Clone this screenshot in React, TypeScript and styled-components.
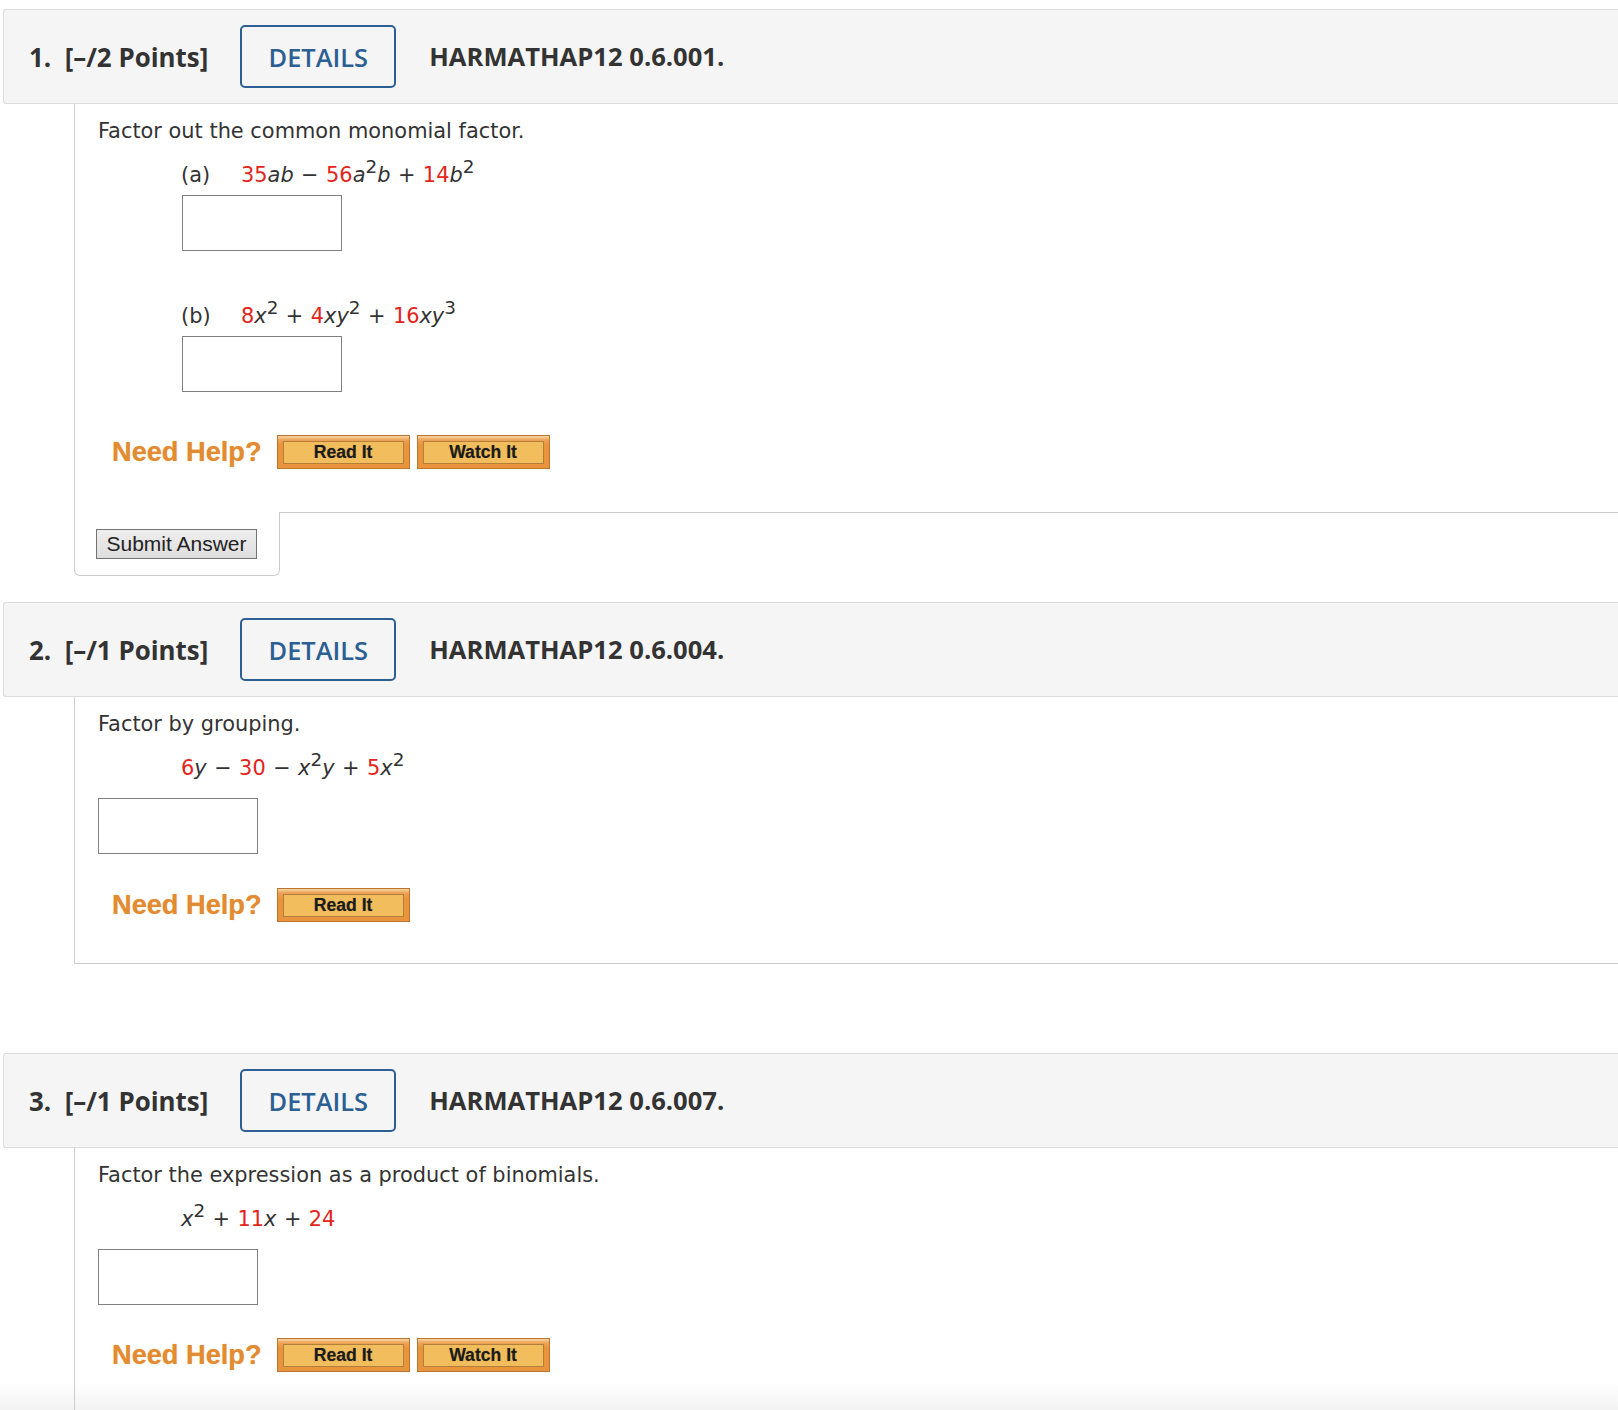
import React from "react";
import styled, { createGlobalStyle } from "styled-components";

const Global = createGlobalStyle`
  html, body { margin: 0; padding: 0; background: #fff; }
  * { box-sizing: border-box; }
`;

const Page = styled.div`
  width: 1618px;
  height: 1410px;
  overflow: hidden;
  padding: 9px 0 0 3px;
  background: linear-gradient(to bottom, #ffffff 0, #ffffff 1382px, #f3f3f3 1410px);
  font-family: "DejaVu Sans", Verdana, sans-serif;
  color: #333;
`;

const Question = styled.section<{ $gap: number }>`
  margin-bottom: ${(p) => p.$gap}px;
`;

const Header = styled.div`
  height: 95px;
  display: flex;
  align-items: center;
  padding-left: 25px;
  background: #f5f5f5;
  border: 1px solid #dcdcdc;
  border-right: none;
  border-radius: 3px 0 0 3px;
  font-family: "Open Sans", "DejaVu Sans", sans-serif;
  font-weight: 700;
  font-size: 25.6px;
  color: #333;
`;

const Points = styled.span`
  white-space: pre;
  font-size: 25.9px;
  margin-right: 32px;
`;

const DetailsButton = styled.button`
  width: 156px;
  height: 63px;
  border: 2px solid #2c5f93;
  border-radius: 5px;
  background: transparent;
  color: #2c5f93;
  font-family: "Open Sans", "DejaVu Sans", sans-serif;
  font-weight: 600;
  font-size: 25.4px;
  padding: 0;
  margin-right: 33px;
`;

const Code = styled.span``;

const Body = styled.div<{ $bottom: boolean; $pb: number }>`
  margin-left: 71px;
  border-left: 1px solid #cccccc;
  border-bottom: ${(p) => (p.$bottom ? "1px solid #cccccc" : "none")};
  padding: 15px 0 ${(p) => p.$pb}px 23px;
  font-size: 20.9px;
  line-height: 24px;
`;

const Prompt = styled.div``;

const MathRow = styled.div<{ $top: number }>`
  margin-top: ${(p) => p.$top}px;
  padding-left: 83px;
  white-space: pre;
  word-spacing: 0.8px;
`;

const PartLabel = styled.span`
  display: inline-block;
  width: 60px;
`;

const Num = styled.span`
  color: #e3241b;
`;

const V = styled.i`
  font-style: italic;
`;

const Sup = styled.sup`
  font-size: 0.88em;
  line-height: 0;
  vertical-align: 0.5em;
`;

const AnswerBox = styled.input<{ $indent: number; $top: number }>`
  display: block;
  margin: ${(p) => p.$top}px 0 0 ${(p) => p.$indent}px;
  width: 160px;
  height: 56px;
  border: 1px solid #808080;
  border-radius: 0;
  background: #fff;
  padding: 0 6px;
  font-size: 18px;
  outline: none;
`;

const HelpRow = styled.div<{ $top: number }>`
  margin-top: ${(p) => p.$top}px;
  padding-left: 14px;
  display: flex;
  align-items: center;
  height: 34px;
`;

const NeedHelp = styled.span`
  font-family: "Liberation Sans", Arial, sans-serif;
  font-weight: 700;
  font-size: 27.2px;
  color: #e38b31;
  text-shadow: 0 0 1px rgba(227, 138, 47, 0.6);
  margin-right: 15px;
`;

const HelpButton = styled.button`
  width: 133px;
  height: 34px;
  margin-right: 7px;
  padding: 5px 5px 4px 5px;
  border: 1px solid #bd752e;
  background: linear-gradient(to bottom, #f7d6a6 0, #eca255 4px, #e8943d 9px, #e8943d 100%);
  cursor: pointer;
`;

const HelpInner = styled.span`
  display: flex;
  align-items: center;
  justify-content: center;
  height: 100%;
  border: 1px solid #b3803c;
  background: #f2be5d;
  font-family: "Liberation Sans", Arial, sans-serif;
  font-weight: 700;
  font-size: 17.6px;
  color: #1b1b1b;
  text-shadow: 0 0 1px rgba(0, 0, 0, 0.35);
`;

const SubmitRow = styled.div`
  display: flex;
  margin-left: 71px;
`;

const SubmitTab = styled.div`
  width: 206px;
  height: 64px;
  border: 1px solid #cccccc;
  border-top: none;
  border-radius: 0 0 6px 6px;
  padding: 17px 0 0 21px;
`;

const SubmitFill = styled.div`
  flex: 1;
  border-top: 1px solid #cccccc;
`;

const SubmitButton = styled.button`
  width: 161px;
  height: 30px;
  border: 1px solid #737373;
  border-radius: 0;
  background: linear-gradient(to bottom, #eeeeee, #dedede);
  font-family: "Liberation Sans", Arial, sans-serif;
  font-size: 21px;
  color: #222;
  padding: 0;
`;

function Help({ watch }: { watch?: boolean }) {
  return (
    <>
      <NeedHelp>Need Help?</NeedHelp>
      <HelpButton>
        <HelpInner>Read It</HelpInner>
      </HelpButton>
      {watch && (
        <HelpButton>
          <HelpInner>Watch It</HelpInner>
        </HelpButton>
      )}
    </>
  );
}

function QHeader({ n, pts, code }: { n: number; pts: number; code: string }) {
  return (
    <Header>
      <Points>{`${n}.\u00a0 [\u2013/${pts} Points]`}</Points>
      <DetailsButton>DETAILS</DetailsButton>
      <Code>{code}</Code>
    </Header>
  );
}

export default function App() {
  return (
    <Page>
      <Global />
      <Question $gap={26}>
        <QHeader n={1} pts={2} code="HARMATHAP12 0.6.001." />
        <Body $bottom={false} $pb={43}>
          <Prompt>Factor out the common monomial factor.</Prompt>
          <MathRow $top={20}>
            <PartLabel>(a)</PartLabel>
            <Num>35</Num>
            <V>ab</V> {"\u2212"} <Num>56</Num>
            <V>a</V>
            <Sup>2</Sup>
            <V>b</V> + <Num>14</Num>
            <V>b</V>
            <Sup>2</Sup>
          </MathRow>
          <AnswerBox $indent={84} $top={8} />
          <MathRow $top={53}>
            <PartLabel>(b)</PartLabel>
            <Num>8</Num>
            <V>x</V>
            <Sup>2</Sup> + <Num>4</Num>
            <V>xy</V>
            <Sup>2</Sup> + <Num>16</Num>
            <V>xy</V>
            <Sup>3</Sup>
          </MathRow>
          <AnswerBox $indent={84} $top={8} />
          <HelpRow $top={43}>
            <Help watch />
          </HelpRow>
        </Body>
        <SubmitRow>
          <SubmitTab>
            <SubmitButton>Submit Answer</SubmitButton>
          </SubmitTab>
          <SubmitFill />
        </SubmitRow>
      </Question>

      <Question $gap={89}>
        <QHeader n={2} pts={1} code="HARMATHAP12 0.6.004." />
        <Body $bottom={true} $pb={41}>
          <Prompt>Factor by grouping.</Prompt>
          <MathRow $top={20}>
            <Num>6</Num>
            <V>y</V> {"\u2212"} <Num>30</Num> {"\u2212"} <V>x</V>
            <Sup>2</Sup>
            <V>y</V> + <Num>5</Num>
            <V>x</V>
            <Sup>2</Sup>
          </MathRow>
          <AnswerBox $indent={0} $top={18} />
          <HelpRow $top={34}>
            <Help />
          </HelpRow>
        </Body>
      </Question>

      <Question $gap={0}>
        <QHeader n={3} pts={1} code="HARMATHAP12 0.6.007." />
        <Body $bottom={false} $pb={200}>
          <Prompt>Factor the expression as a product of binomials.</Prompt>
          <MathRow $top={20}>
            <V>x</V>
            <Sup>2</Sup> + <Num>11</Num>
            <V>x</V> + <Num>24</Num>
          </MathRow>
          <AnswerBox $indent={0} $top={18} />
          <HelpRow $top={33}>
            <Help watch />
          </HelpRow>
        </Body>
      </Question>
    </Page>
  );
}
